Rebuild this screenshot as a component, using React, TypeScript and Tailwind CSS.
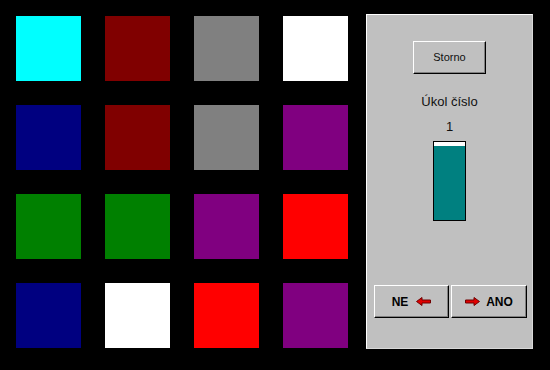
import React from "react";

const colors: string[] = [
  "bg-[#00ffff]", "bg-[#800000]", "bg-[#808080]", "bg-white",
  "bg-[#000080]", "bg-[#800000]", "bg-[#808080]", "bg-[#800080]",
  "bg-[#008000]", "bg-[#008000]", "bg-[#800080]", "bg-[#ff0000]",
  "bg-[#000080]", "bg-white", "bg-[#ff0000]", "bg-[#800080]",
];

const Arrow: React.FC<{ dir: "left" | "right" }> = ({ dir }) => (
  <svg
    width="15"
    height="9"
    viewBox="0 0 15 9"
    className={dir === "right" ? "-scale-x-100" : ""}
  >
    <polygon
      points="0.5,4.5 6,0.5 6,3 14.5,3 14.5,6 6,6 6,8.5"
      fill="#e00000"
      stroke="#700000"
      strokeWidth="1"
      strokeLinejoin="round"
    />
  </svg>
);

const winButton =
  "flex items-center justify-center bg-[#c0c0c0] border border-t-white border-l-white border-r-black border-b-black shadow-[inset_-1px_-1px_0_#808080]";

export default function App() {
  return (
    <div className="w-[550px] h-[370px] bg-black flex font-['Liberation_Sans',Arial,sans-serif] text-black">
      <div className="pl-4 pt-4 grid grid-cols-[repeat(4,65px)] auto-rows-[65px] gap-6 self-start">
        {colors.map((c, i) => (
          <div key={i} className={`w-[65px] h-[65px] ${c}`} />
        ))}
      </div>

      <div className="ml-[18px] mt-[14px] w-[167px] h-[335px] bg-[#c0c0c0] border border-t-white border-l-white border-r-[#d8d8d8] border-b-[#d8d8d8] flex flex-col items-center pt-[26px]">
        <button className={`${winButton} w-[73px] h-[33px] text-[11px] text-[#101010]`}>
          Storno
        </button>

        <div className="mt-[20px] text-[13px] leading-[15px] text-[#101010]">Úkol číslo</div>
        <div className="mt-[10px] text-[13px] leading-[15px] text-[#101010]">1</div>

        <div className="mt-[7px] w-[33px] h-[80px] border border-black bg-[#008080] flex flex-col">
          <div className="h-[4px] bg-white" />
        </div>

        <div className="mt-auto mb-[30px] flex gap-[2px] self-start ml-[7px]">
          <button className={`${winButton} w-[75px] h-[33px] gap-[8px] text-[12px] font-bold`}>
            <span>NE</span>
            <Arrow dir="left" />
          </button>
          <button className={`${winButton} w-[76px] h-[33px] gap-[6px] text-[12px] font-bold`}>
            <Arrow dir="right" />
            <span>ANO</span>
          </button>
        </div>
      </div>
    </div>
  );
}
